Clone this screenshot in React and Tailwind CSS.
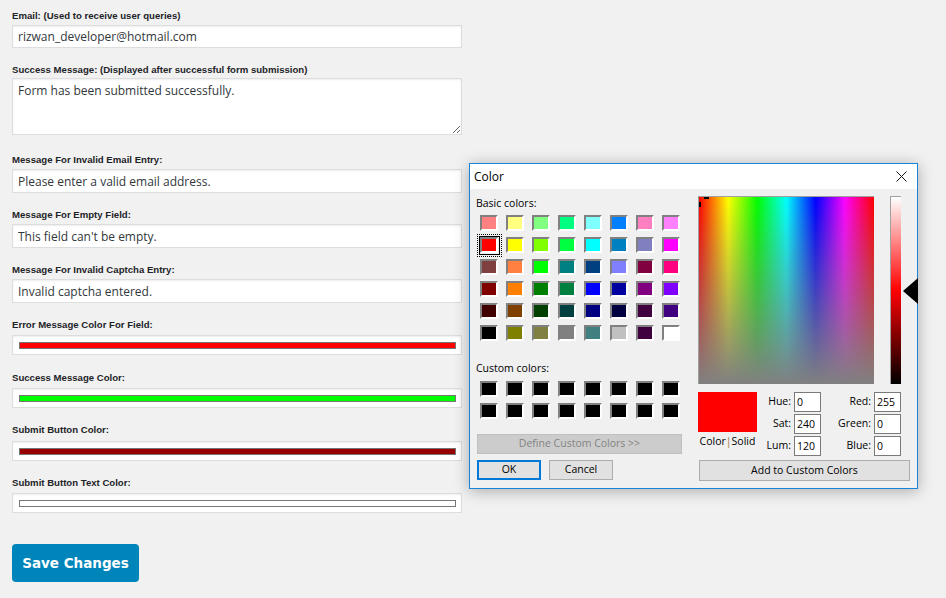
import React from "react";

const basicColors = [
  "#ff8080", "#ffff80", "#80ff80", "#00ff80", "#80ffff", "#0080ff", "#ff80c0", "#ff80ff",
  "#ff0000", "#ffff00", "#80ff00", "#00ff40", "#00ffff", "#0080c0", "#8080c0", "#ff00ff",
  "#804040", "#ff8040", "#00ff00", "#008080", "#004080", "#8080ff", "#800040", "#ff0080",
  "#800000", "#ff8000", "#008000", "#008040", "#0000ff", "#0000a0", "#800080", "#8000ff",
  "#400000", "#804000", "#004000", "#004040", "#000080", "#000040", "#400040", "#400080",
  "#000000", "#808000", "#808040", "#808080", "#408080", "#c0c0c0", "#400040", "#ffffff",
];

const customColors = Array(16).fill("#000000");

const Label = ({ children, className = "" }) => (
  <p className={`font-['Liberation_Sans',Arial,sans-serif] text-[9.6px] font-bold leading-[12px] text-[#1d2327] ${className}`}>
    {children}
  </p>
);

const TextInput = ({ value, className = "" }) => (
  <input
    readOnly
    value={value}
    className={`block w-[450px] border border-[#dddddd] bg-white pl-[5px] font-['Open_Sans',sans-serif] text-[12px] text-[#32373c] shadow-[inset_0_1px_2px_rgba(0,0,0,0.07)] outline-none ${className}`}
  />
);

const ColorField = ({ color, className = "" }) => (
  <div className={`h-[20px] w-[450px] border border-[#dddddd] bg-white pt-[6px] pl-[6px] shadow-[inset_0_1px_2px_rgba(0,0,0,0.07)] ${className}`}>
    <div className="h-[7px] w-[437px] border border-[#767676]" style={{ background: color }} />
  </div>
);

const Swatch = ({ color, selected }) => (
  <div className="relative h-[16px] w-[18px]">
    {selected && (
      <>
        <div className="absolute -top-[3px] -left-[3px] -right-[4px] -bottom-[4px] border border-dotted border-black" />
        <div className="absolute -top-[1px] -left-[1px] -right-[2px] -bottom-[2px] border border-black" />
      </>
    )}
    <div
      className="relative h-full w-full border-2 border-t-[#808080] border-l-[#808080] border-r-white border-b-white"
      style={{ background: color }}
    />
  </div>
);

const WinButton = ({ children, className = "" }) => (
  <div className={`flex items-center justify-center border text-black ${className}`}>{children}</div>
);

const ValueBox = ({ value }) => (
  <div className="h-[20px] w-[27px] border border-[#7a7a7a] bg-white pl-[2px] leading-[18px] text-black">{value}</div>
);

const ColorDialog = () => (
  <div className="absolute left-[469px] top-[163px] flex h-[326px] w-[449px] flex-col border border-[#1883d7] bg-[#f0f0f0] font-['Open_Sans',sans-serif] text-[10.5px] text-black shadow-[0_2px_14px_rgba(0,0,0,0.3)]">
    {/* title bar */}
    <div className="flex h-[25px] items-center justify-between bg-white pl-[4px] pr-[10px]">
      <span className="text-[12px]">Color</span>
      <svg width="11" height="11" viewBox="0 0 11 11" stroke="#111" strokeWidth="1">
        <path d="M0.5 0.5 L10.5 10.5 M10.5 0.5 L0.5 10.5" />
      </svg>
    </div>

    <div className="flex flex-1">
      {/* left side */}
      <div className="w-[228px]">
        <p className="mt-[7px] pl-[6px] leading-[14px]">Basic colors:</p>
        <div className="mt-[5px] ml-[10px] grid grid-cols-[repeat(8,18px)] gap-x-[8px] gap-y-[6px]">
          {basicColors.map((c, i) => (
            <Swatch key={i} color={c} selected={i === 8} />
          ))}
        </div>
        <p className="mt-[20px] pl-[6px] leading-[14px]">Custom colors:</p>
        <div className="mt-[6px] ml-[10px] grid grid-cols-[repeat(8,18px)] gap-x-[8px] gap-y-[6px]">
          {customColors.map((c, i) => (
            <Swatch key={i} color={c} />
          ))}
        </div>
        <WinButton className="mt-[15px] ml-[7px] h-[20px] w-[205px] border-[#bfbfbf] bg-[#cccccc] !text-[#838383]">
          Define Custom Colors &gt;&gt;
        </WinButton>
        <div className="mt-[6px] ml-[7px] flex gap-[8px]">
          <WinButton className="h-[20px] w-[64px] border-2 border-[#0078d7] bg-[#e1e1e1]">OK</WinButton>
          <WinButton className="h-[20px] w-[64px] border-[#adadad] bg-[#e1e1e1]">Cancel</WinButton>
        </div>
      </div>

      {/* right side */}
      <div className="flex-1">
        <div className="mt-[7px] flex">
          <div className="relative h-[188px] w-[176px] border-t border-l border-[#a0a0a0] bg-[linear-gradient(to_right,#ff0000,#ffff00,#00ff00,#00ffff,#0000ff,#ff00ff,#ff0000)]">
            <div className="h-full w-full bg-[linear-gradient(to_bottom,rgba(128,128,128,0),#808080)]" />
            <div className="absolute left-[5px] top-[0px] h-[2px] w-[5px] bg-black" />
            <div className="absolute left-[0px] top-[5px] h-[5px] w-[2px] bg-black" />
          </div>
          <div className="relative ml-[16px] h-[188px] w-[11px] border-t border-l border-[#a0a0a0] bg-[linear-gradient(to_bottom,#ffffff,#ff0000_50%,#000000)]">
            <svg className="absolute left-[12px] top-[81px]" width="15" height="26" viewBox="0 0 15 26">
              <path d="M0 13 L15 0 L15 26 Z" fill="#000" />
            </svg>
          </div>
        </div>

        <div className="mt-[8px] flex">
          <div className="w-[59px]">
            <div className="h-[40px] w-[59px] bg-[#ff0000]" />
            <p className="mt-[2px] text-center leading-[14px]">
              Color<span className="text-[#9a7a40]">|</span>Solid
            </p>
          </div>
          <div className="grid grid-cols-[34px_27px_47px_27px] items-center gap-x-[3px] gap-y-[2px]">
            <span className="text-right">Hue:</span>
            <ValueBox value="0" />
            <span className="text-right">Red:</span>
            <ValueBox value="255" />
            <span className="text-right">Sat:</span>
            <ValueBox value="240" />
            <span className="text-right">Green:</span>
            <ValueBox value="0" />
            <span className="text-right">Lum:</span>
            <ValueBox value="120" />
            <span className="text-right">Blue:</span>
            <ValueBox value="0" />
          </div>
        </div>

        <WinButton className="mt-[4px] ml-[1px] h-[21px] w-[211px] border-[#adadad] bg-[#e1e1e1]">
          Add to Custom Colors
        </WinButton>
      </div>
    </div>
  </div>
);

const App = () => {
  return (
    <div className="relative h-[598px] overflow-hidden bg-[#f1f1f1]">
      <div className="w-[462px] pt-[10px] pl-[12px]">
        <Label className="mb-[3px]">Email: (Used to receive user queries)</Label>
        <TextInput value="rizwan_developer@hotmail.com" className="mb-[16px] h-[23px]" />

        <Label className="mb-[2px]">Success Message: (Displayed after successful form submission)</Label>
        <textarea
          readOnly
          value="Form has been submitted successfully."
          className="mb-[19px] block h-[57px] w-[450px] border border-[#dddddd] bg-white px-[5px] pt-[3px] font-['Open_Sans',sans-serif] text-[12px] leading-[17px] text-[#32373c] shadow-[inset_0_1px_2px_rgba(0,0,0,0.07)] outline-none"
        />

        <Label className="mb-[3px]">Message For Invalid Email Entry:</Label>
        <TextInput value="Please enter a valid email address." className="mb-[16px] h-[24px]" />

        <Label className="mb-[3px]">Message For Empty Field:</Label>
        <TextInput value="This field can't be empty." className="mb-[16px] h-[24px]" />

        <Label className="mb-[3px]">Message For Invalid Captcha Entry:</Label>
        <TextInput value="Invalid captcha entered." className="mb-[16px] h-[24px]" />

        <Label className="mb-[4px]">Error Message Color For Field:</Label>
        <ColorField color="#ff0000" className="mb-[17px]" />

        <Label className="mb-[4px]">Success Message Color:</Label>
        <ColorField color="#00ff00" className="mb-[16px]" />

        <Label className="mb-[5px]">Submit Button Color:</Label>
        <ColorField color="#990000" className="mb-[16px]" />

        <Label className="mb-[4px]">Submit Button Text Color:</Label>
        <ColorField color="#ffffff" className="mb-[31px]" />

        <button className="flex h-[38px] w-[127px] items-center justify-center rounded-[4px] bg-[#0085ba] font-['DejaVu_Sans',Verdana,sans-serif] text-[13.5px] font-bold text-white">
          Save Changes
        </button>
      </div>

      <ColorDialog />
    </div>
  );
};

export default App;
